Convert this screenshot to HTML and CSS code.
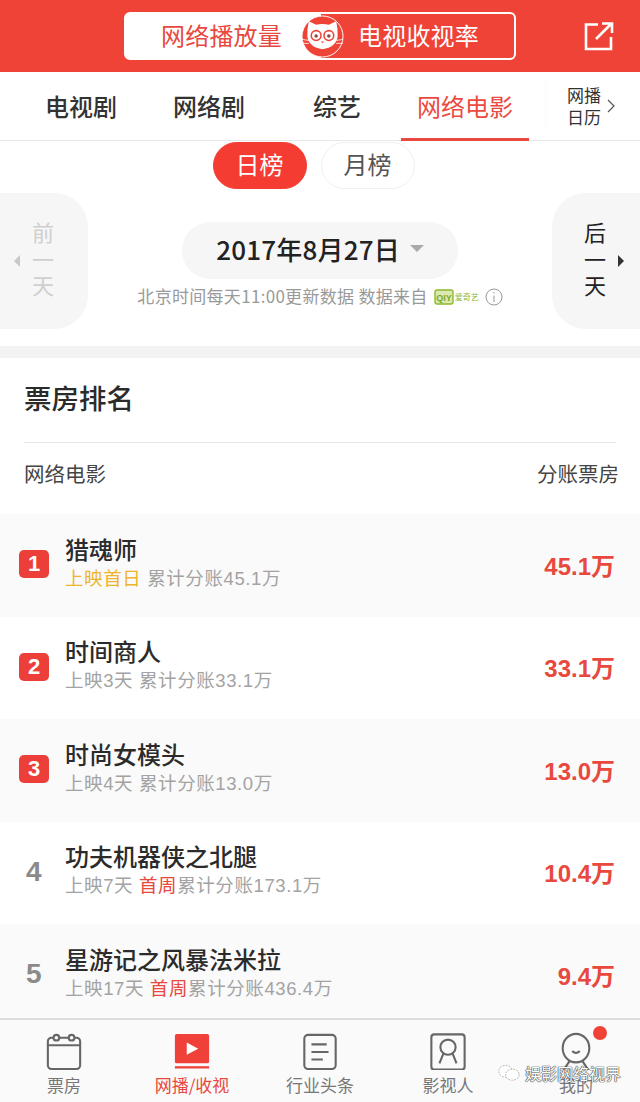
FILE: index.html
```html
<!DOCTYPE html>
<html lang="zh">
<head>
<meta charset="utf-8">
<title>票房排名</title>
<link rel="stylesheet" href="styles.css">
</head>
<body>
<div class="page">
  <header class="top">
    <div class="switch">
      <div class="sw-left">网络播放量</div>
      <div class="sw-right">电视收视率</div>
      <svg class="cat" viewBox="0 0 44 44">
        <circle cx="22" cy="22" r="21" fill="#f04337" stroke="#fff" stroke-width="1"/>
        <path d="M8 6.500 L15.500 10 Q22 8.500 28.500 10 L36 6.500 Q38 15 37.500 22 Q36 33 22 35 Q8 33 6.500 22 Q6 15 8 6.500Z" fill="#fff"/>
        <circle cx="15.500" cy="21" r="5" fill="none" stroke="#f04337" stroke-width="1.600"/>
        <circle cx="28.500" cy="21" r="5" fill="none" stroke="#f04337" stroke-width="1.600"/>
        <circle cx="15.500" cy="21.500" r="1.800" fill="#8a4a45"/>
        <circle cx="28.500" cy="21.500" r="1.800" fill="#8a4a45"/>
        <path d="M20.500 27 L22 29 L23.500 27Z" fill="#f04337"/>
        <path d="M1 25 L8 26 M1 29 L8 29 M43 25 L36 26 M43 29 L36 29" stroke="#fff" stroke-width="0.800"/>
      </svg>
    </div>
    <svg class="share" viewBox="0 0 32 32" fill="none" stroke="#fff" stroke-width="2.600">
      <path d="M15 4.500 H3 V29 H28 V17"/>
      <path d="M13 19 L28 4 M19 3.500 H29 V13"/>
    </svg>
  </header>

  <nav class="tabs">
    <div class="tab">电视剧</div>
    <div class="tab">网络剧</div>
    <div class="tab">综艺</div>
    <div class="tab tab-on">网络电影</div>
    <div class="tab-cal">
      <span class="cal-text">网播<br>日历</span>
      <svg class="cal-arrow" viewBox="0 0 8 14" fill="none" stroke="#555" stroke-width="1.200"><path d="M1 1 L7 7 L1 13"/></svg>
    </div>
  </nav>

  <div class="pills">
    <div class="pill pill-on">日榜</div>
    <div class="pill">月榜</div>
  </div>

  <section class="dates">
    <div class="day day-prev">
      <span class="tri-l"></span>
      <span class="day-text">前<br>一<br>天</span>
    </div>
    <div class="date-mid">
      <div class="date-box">2017年8月27日<span class="tri-d"></span></div>
      <div class="note"><span class="note-text">北京时间每天11:00更新数据 数据来自</span>
        <svg class="iqiyi" viewBox="0 0 20 16"><rect x="1" y="1" width="18" height="14" rx="2" fill="#dbe9b0" stroke="#8fb82e" stroke-width="1.400"/><text x="10" y="12" text-anchor="middle" class="iq-t">QIY</text></svg><span class="iq-name">爱奇艺</span>
        <svg class="info" viewBox="0 0 18 18" fill="none" stroke="#999" stroke-width="1"><circle cx="9" cy="9" r="8"/><path d="M9 7.500 V14 M9 4 V5.500"/></svg>
      </div>
    </div>
    <div class="day day-next">
      <span class="day-text">后<br>一<br>天</span>
      <span class="tri-r"></span>
    </div>
  </section>

  <div class="band"></div>

  <section class="rank">
    <h2 class="rank-title">票房排名</h2>
    <div class="rank-head"><span>网络电影</span><span>分账票房</span></div>
    <div class="row row-alt">
      <span class="badge">1</span>
      <div class="info-col">
        <div class="name">猎魂师</div>
        <div class="sub"><span class="gold">上映首日</span> 累计分账45.1万</div>
      </div>
      <div class="money">45.1万</div>
    </div>
    <div class="row">
      <span class="badge">2</span>
      <div class="info-col">
        <div class="name">时间商人</div>
        <div class="sub">上映3天 累计分账33.1万</div>
      </div>
      <div class="money">33.1万</div>
    </div>
    <div class="row row-alt">
      <span class="badge">3</span>
      <div class="info-col">
        <div class="name">时尚女模头</div>
        <div class="sub">上映4天 累计分账13.0万</div>
      </div>
      <div class="money">13.0万</div>
    </div>
    <div class="row">
      <span class="num">4</span>
      <div class="info-col">
        <div class="name">功夫机器侠之北腿</div>
        <div class="sub">上映7天 <span class="red">首周</span>累计分账173.1万</div>
      </div>
      <div class="money">10.4万</div>
    </div>
    <div class="row row-alt">
      <span class="num">5</span>
      <div class="info-col">
        <div class="name">星游记之风暴法米拉</div>
        <div class="sub">上映17天 <span class="red">首周</span>累计分账436.4万</div>
      </div>
      <div class="money">9.4万</div>
    </div>
  </section>

  <footer class="bar">
    <div class="bar-item">
      <svg class="ico" viewBox="0 0 40 40" fill="none" stroke="#666" stroke-width="2.200">
        <rect x="3" y="6" width="34" height="33" rx="4"/>
        <path d="M3 14 H37"/>
        <circle cx="12" cy="6" r="3" fill="#fafafa"/><circle cx="28" cy="6" r="3" fill="#fafafa"/>
      </svg>
      <span>票房</span>
    </div>
    <div class="bar-item bar-on">
      <svg class="ico" viewBox="0 0 40 40">
        <rect x="2" y="2" width="36" height="31" rx="2" fill="#f0403a"/>
        <rect x="2" y="36" width="36" height="2.400" fill="#f0403a"/>
        <path d="M14.500 11 L26.500 17.500 L14.500 24Z" fill="#fff"/>
      </svg>
      <span>网播/收视</span>
    </div>
    <div class="bar-item">
      <svg class="ico" viewBox="0 0 40 40" fill="none" stroke="#666" stroke-width="2.200">
        <rect x="3.500" y="3" width="33" height="36" rx="4"/>
        <path d="M11 13 H27 M11 21 H29 M11 29 H23"/>
      </svg>
      <span>行业头条</span>
    </div>
    <div class="bar-item">
      <svg class="ico" viewBox="0 0 40 40" fill="none" stroke="#666" stroke-width="2.200">
        <rect x="2.500" y="2.500" width="35" height="37" rx="3"/>
        <circle cx="20" cy="16" r="8"/>
        <path d="M15 23 L11 33 M25 23 L29 33"/>
      </svg>
      <span>影视人</span>
    </div>
    <div class="bar-item bar-me">
      <svg class="ico" viewBox="0 0 40 40" fill="none" stroke="#666" stroke-width="2.200">
        <ellipse cx="20" cy="17" rx="14" ry="15"/>
        <path d="M16 20 Q20 24 24 20 M13 31 L7 40 M27 31 L33 40"/>
      </svg>
      <span>我的</span>
      <i class="dot"></i>
    </div>
  </footer>

  <div class="mark">
    <svg class="mark-ico" viewBox="0 0 26 20" fill="#fff" stroke="#888" stroke-width="0.800" stroke-dasharray="2 1.500"><ellipse cx="9" cy="8" rx="8" ry="7"/><ellipse cx="17" cy="12" rx="8" ry="6.500"/></svg>
    <span>娱影网络视界</span>
  </div>
</div>
</body>
</html>
```

FILE: styles.css
```css
* { box-sizing: border-box; }
html, body { margin: 0; padding: 0; }
body {
  background: #fff;
  font-family: "Noto Sans CJK SC", "Liberation Sans", sans-serif;
  color: #2b2b2b;
}
.page {
  position: relative;
  width: 640px;
  height: 1102px;
  overflow: hidden;
  display: flex;
  flex-direction: column;
}

/* top red bar */
.top {
  height: 72px;
  flex: none;
  background: #f04337;
  display: flex;
  align-items: center;
  padding: 0 25px 0 124px;
  justify-content: space-between;
}
.switch {
  position: relative;
  width: 392px;
  height: 48px;
  border: 2px solid #fff;
  border-radius: 6px;
  display: flex;
  align-items: center;
  background: linear-gradient(to right, #fff 0, #fff 195px, #f04337 195px);
}
.sw-left, .sw-right {
  font-size: 24px;
  letter-spacing: 0.2px;
  line-height: 40px;
  margin-bottom: 3px;
}
.sw-left { color: #e8483e; margin-left: 35px; width: 122px; white-space: nowrap; }
.sw-right { color: #fff; margin-left: 75px; white-space: nowrap; }
.cat {
  position: absolute;
  left: 175px;
  top: 1px;
  width: 43px;
  height: 43px;
}
.share { width: 32px; height: 32px; }

/* tabs */
.tabs {
  height: 69px;
  flex: none;
  display: flex;
  align-items: stretch;
  border-bottom: 1px solid #e8e8e8;
  padding-left: 17px;
}
.tab {
  width: 128px;
  font-size: 24px;
  font-weight: 500;
  line-height: 68px;
  text-align: center;
  color: #333;
  white-space: nowrap;
}
.tab-on {
  color: #ea4a40;
  border-bottom: 3px solid #e8483e;
  margin-bottom: -1px;
  font-weight: 400;
}
.tab-cal {
  margin-left: 18px;
  flex: 1;
  display: flex;
  align-items: center;
  padding-left: 20px;
  gap: 6px;
  box-shadow: -6px 0 8px -7px rgba(0,0,0,0.03);
}
.cal-text { font-size: 17px; line-height: 22px; color: #333; }
.cal-arrow { width: 8px; height: 14px; }

/* pills */
.pills {
  flex: none;
  height: 47px;
  margin-top: 1px;
  display: flex;
  justify-content: center;
  gap: 14px;
  padding-right: 13px;
}
.pill {
  width: 94px;
  height: 47px;
  border-radius: 23.500px;
  border: 1px solid #f0f0f0;
  font-size: 24px;
  line-height: 42px;
  text-align: center;
  color: #555;
}
.pill-on { background: #f43c33; border-color: #f43c33; color: #fff; }

/* date row */
.dates {
  flex: none;
  height: 136px;
  margin-top: 4px;
  display: flex;
  justify-content: space-between;
}
.day {
  width: 88px;
  height: 136px;
  background: #f6f6f6;
  display: flex;
  align-items: center;
}
.day-prev { border-radius: 0 34px 34px 0; padding-left: 14px; gap: 12px; }
.day-next { border-radius: 34px 0 0 34px; padding-left: 32px; gap: 12px; }
.day-text { font-size: 22px; line-height: 26.500px; text-align: center; padding-bottom: 6px; }
.day-prev .day-text { color: #cfcfcf; }
.day-next .day-text { color: #222; }
.tri-l, .tri-r { width: 0; height: 0; border-top: 6px solid transparent; border-bottom: 6px solid transparent; }
.tri-l { border-right: 6px solid #c8c8c8; }
.tri-r { border-left: 6px solid #333; }
.date-mid {
  display: flex;
  flex-direction: column;
  align-items: center;
  padding-top: 29px;
}
.date-box {
  width: 276px;
  height: 57px;
  border-radius: 29px;
  background: #f6f6f6;
  font-size: 26px;
  letter-spacing: 0.2px;
  font-weight: 500;
  line-height: 50px;
  padding-bottom: 4px;
  color: #222;
  display: flex;
  justify-content: center;
  align-items: center;
  gap: 10px;
}
.tri-d {
  width: 0; height: 0;
  border-left: 7px solid transparent;
  border-right: 7px solid transparent;
  border-top: 7px solid #aaa;
}
.note {
  margin-top: 5px;
  font-size: 17px;
  line-height: 24px;
  color: #999;
  white-space: nowrap;
  display: flex;
  align-items: center;
  gap: 6px;
}
.note-text { letter-spacing: 0.3px; margin-bottom: 2px; }
.iqiyi { width: 20px; height: 16px; margin-right: -5px; }
.iq-t { font-family: "Liberation Sans", sans-serif; font-size: 9px; font-weight: 700; fill: #7fa828; }
.iq-name { font-size: 8px; color: #8fb82e; }
.info { width: 18px; height: 18px; }

/* band */
.band { flex: none; height: 12px; margin-top: 17px; background: #f3f3f3; }

/* rank */
.rank { flex: 1; min-height: 0; display: flex; flex-direction: column; overflow: hidden; }
.rank-title {
  margin: 0 24px;
  height: 85px;
  flex: none;
  border-bottom: 1px solid #e8e8e8;
  font-size: 27.500px;
  font-weight: 500;
  line-height: 78px;
  color: #2b2b2b;
}
.rank-head {
  flex: none;
  height: 71px;
  padding: 0 21px 0 24px;
  display: flex;
  justify-content: space-between;
  font-size: 20.500px;
  line-height: 60px;
  color: #444;
}
.row {
  flex: none;
  height: 102.500px;
  display: flex;
  align-items: center;
  padding: 0 25px 2px 19px;
}
.row-alt { background: #fafafa; }
.badge {
  width: 30px;
  height: 28px;
  flex: none;
  border-radius: 5px;
  background: #ec3f3a;
  color: #fff;
  font-family: "Liberation Sans", sans-serif;
  font-size: 22px;
  font-weight: 700;
  line-height: 28px;
  text-align: center;
}
.num {
  width: 30px;
  flex: none;
  padding-left: 7px;
  font-family: "Liberation Sans", sans-serif;
  font-size: 28px;
  font-weight: 700;
  color: #8a8a8a;
}
.info-col { flex: 1; margin-left: 17px; min-width: 0; padding-bottom: 4px; }
.name { font-size: 24px; font-weight: 500; line-height: 30px; color: #2b2b2b; white-space: nowrap; margin-left: -1px; }
.sub {
  margin-top: 3px;
  font-size: 18.500px;
  letter-spacing: 0.6px;
  line-height: 24px;
  color: #a3a3a3;
  white-space: nowrap;
  margin-left: -1px;
  font-family: "Liberation Sans", "Noto Sans CJK SC", sans-serif;
}
.gold { color: #eeb52c; }
.red { color: #e8483e; }
.money {
  font-family: "Liberation Sans", "Noto Sans CJK SC", sans-serif;
  font-size: 24px;
  font-weight: 700;
  color: #e8483e;
  white-space: nowrap;
}

/* bottom bar */
.bar {
  flex: none;
  height: 84px;
  background: #fafafa;
  border-top: 2px solid #dcdcdc;
  display: grid;
  grid-template-columns: repeat(5, 128px);
}
.bar-item {
  display: flex;
  flex-direction: column;
  align-items: center;
  padding-top: 12px;
  font-size: 17px;
  line-height: 24px;
  color: #777;
  position: relative;
}
.bar-on { color: #e8483e; }
.ico { width: 38px; height: 38px; margin-bottom: 3px; }
.dot {
  position: absolute;
  right: 33px;
  top: 6px;
  width: 14px;
  height: 14px;
  border-radius: 50%;
  background: #ef4136;
}

/* watermark */
.mark {
  position: absolute;
  left: 498px;
  top: 1061px;
  display: flex;
  align-items: center;
  gap: 5px;
  font-size: 16px;
  color: #fff;
  text-shadow: 0 0 1px #333, 0 0 1px #333, 0 0 1px #333;
  white-space: nowrap;
}
.mark-ico { width: 22px; height: 18px; }
```
